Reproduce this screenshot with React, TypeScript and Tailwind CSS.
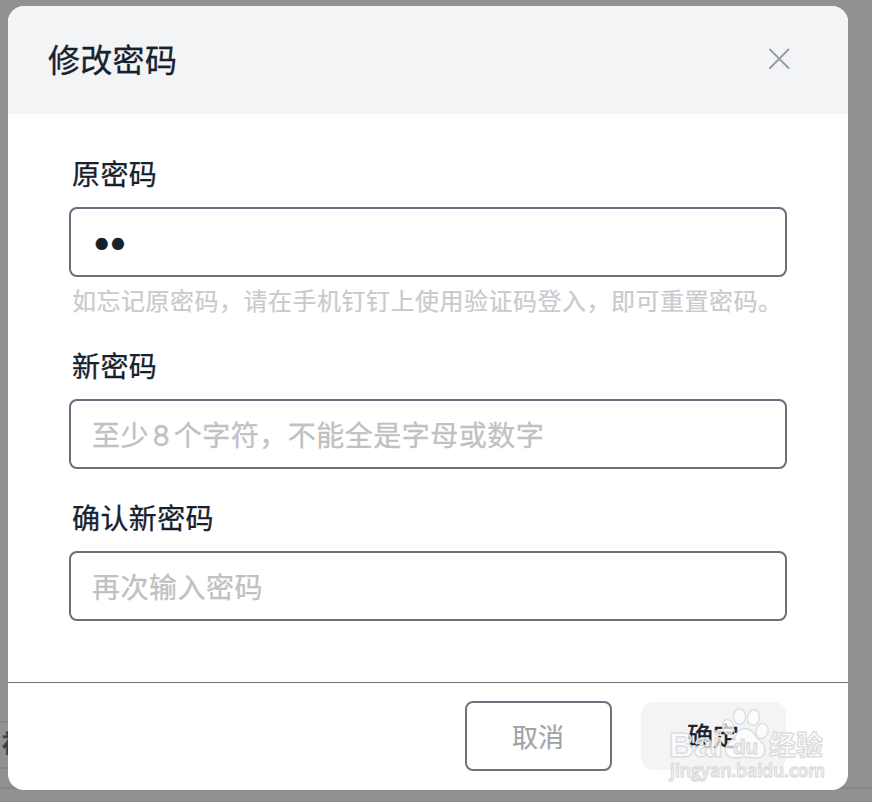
import { useState } from "react";

interface Field {
  id: string;
  label: string;
  placeholder?: string;
  helpText?: string;
}

const fields: Field[] = [
  {
    id: "oldPassword",
    label: "原密码",
    helpText: "如忘记原密码，请在手机钉钉上使用验证码登入，即可重置密码。",
  },
  {
    id: "newPassword",
    label: "新密码",
    placeholder: "至少8个字符，不能全是字母或数字",
  },
  {
    id: "confirmPassword",
    label: "确认新密码",
    placeholder: "再次输入密码",
  },
];

function CloseIcon() {
  return (
    <svg width="22" height="22" viewBox="0 0 22 22" fill="none" stroke="#989da3" strokeWidth="2" strokeLinecap="round">
      <path d="M2 1.500 20.500 20M20.500 1.500 2 20" />
    </svg>
  );
}

function Watermark() {
  return (
    <svg
      className="pointer-events-none absolute right-[18px] bottom-[4px]"
      width="166"
      height="80"
      viewBox="664 706 166 80"
      fill="#ffffff"
      fillOpacity="0.7"
      stroke="#dcddde"
      strokeWidth="1.4"
      strokeLinejoin="round"
    >
      <text x="669" y="757" fontSize="35" fontWeight="700" textLength="54" lengthAdjust="spacingAndGlyphs" fontFamily="Liberation Sans, sans-serif">
        Bai
      </text>
      <ellipse cx="728" cy="727" rx="5.4" ry="7.5" transform="rotate(-12 728 727)" />
      <ellipse cx="739.6" cy="716.5" rx="6" ry="7.8" />
      <ellipse cx="753.4" cy="717.5" rx="6" ry="7.8" transform="rotate(8 753.4 717.5)" />
      <ellipse cx="762" cy="731" rx="6" ry="7.5" transform="rotate(18 762 731)" />
      <path d="M745 728.500c-5 0-7 3.500-10 8-4 5-9.500 7-9.500 13 0 5.500 4 8.500 9 8.500 4 0 7-1 11-1s7 1 11 1c5.500 0 8.500-3.500 8.500-9 0-6-6-8.500-9-12.500-3-5-6-8-11-8z" />
      <text x="733" y="754" fontSize="21" fontWeight="700" textLength="25" lengthAdjust="spacingAndGlyphs" fontFamily="Liberation Sans, sans-serif" fill="#eeeff0">
        du
      </text>
      <text x="769" y="755" fontSize="27" fontWeight="700" textLength="54" fontFamily="Noto Sans CJK SC, sans-serif">
        经验
      </text>
      <text x="670" y="777" fontSize="18.500" fontWeight="600" textLength="155" lengthAdjust="spacingAndGlyphs" fontFamily="Open Sans, sans-serif">
        jingyan.baidu.com
      </text>
    </svg>
  );
}

export default function App() {
  const [values, setValues] = useState<Record<string, string>>({ oldPassword: "12" });

  const handleChange = (id: string, value: string) => {
    setValues((prev) => ({ ...prev, [id]: value }));
  };

  return (
    <div
      lang="zh-CN"
      className="relative h-[802px] w-[872px] overflow-hidden bg-[#919191] pt-[6px] pl-2 font-['Inter','Noto_Sans_CJK_SC',sans-serif] text-[#17212e] [-webkit-text-stroke:0.3px]"
    >
      {/* dimmed page behind the dialog */}
      <div className="absolute top-[721px] left-0 h-[2px] w-2 bg-[#858585]" />
      <div className="absolute top-[767px] left-0 h-[2px] w-2 bg-[#858585]" />
      <div className="absolute top-[787px] left-0 h-[2px] w-full bg-[#878787]" />
      <div className="absolute top-[730px] left-[2px] text-2xl leading-7 font-bold text-[#404040]">衬</div>

      <div className="relative flex h-[784px] w-[840px] flex-col overflow-hidden rounded-2xl bg-white">
        <header className="flex h-[108px] shrink-0 items-center justify-between bg-[#f3f4f6] pr-[58px] pl-10">
          <h1 className="pt-px text-[32px] leading-none tracking-[0.3px]">修改密码</h1>
          <button type="button" aria-label="关闭" className="-mt-0.5">
            <CloseIcon />
          </button>
        </header>

        <form className="flex-1 px-[61px] pt-[41px]">
          {fields.map((field) => (
            <div key={field.id} className="mb-[30px] flex flex-col">
              <label htmlFor={field.id} className="mb-3 pl-[3px] text-[28px] leading-10 tracking-[0.4px]">
                {field.label}
              </label>
              <input
                id={field.id}
                type="password"
                value={values[field.id] || ""}
                placeholder={field.placeholder}
                onChange={(e) => handleChange(field.id, e.target.value)}
                className="h-[70px] w-full rounded-lg border-2 border-[#6a707b] pr-[21px] pb-0.5 pl-5 text-[38px] tracking-[-5.2px] outline-none [text-autospace:normal] placeholder:text-[#c0c1c2] placeholder-shown:pt-1 placeholder-shown:pb-0 placeholder-shown:pl-[21px] placeholder-shown:text-[28px] placeholder-shown:tracking-[0.5px]"
              />
              {field.helpText && (
                <p className="mt-[5px] -mb-[5px] pl-[3px] text-2xl leading-10 tracking-[0.5px] whitespace-nowrap text-[#c8cacd] [-webkit-text-stroke:0.2px]">
                  {field.helpText}
                </p>
              )}
            </div>
          ))}
        </form>

        <footer className="flex h-[108px] shrink-0 items-start justify-end border-t border-[#6a737e] pt-[18px] pr-[62px] text-[26px]">
          <button type="button" className="mr-[29px] h-[70px] w-[147px] rounded-lg border-2 border-[#6a737e] pt-[3px] pr-px text-[#a0a4a9] [-webkit-text-stroke:0.2px]">
            取消
          </button>
          <button type="button" className="mt-px h-[68px] w-[145px] rounded-xl bg-[#f3f4f6] pr-px [-webkit-text-stroke:0.5px]">
            确定
          </button>
        </footer>
        <Watermark />
      </div>
    </div>
  );
}
